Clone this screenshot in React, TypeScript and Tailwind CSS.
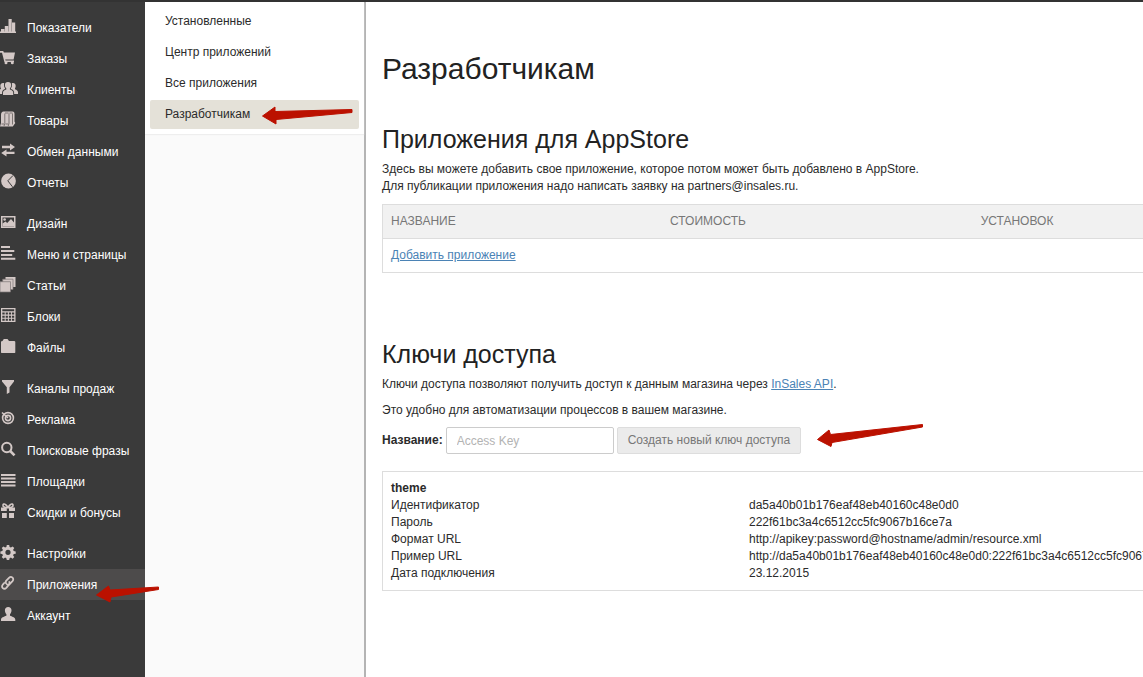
import type { ReactNode } from "react";

type NavItem = { label: string; icon: ReactNode; active?: boolean };

// Icons are drawn on an 18x19 grid and filled with the current text color
const icons = {
  stats: (
    <path d="M0 13.500h16V15H0zM1 11h3.500v3H1zM4.800 8h3.400v6H4.800zM8.500 1h3.200v13H8.500zM12 4.500h3.200V14H12z" />
  ),
  cart: (
    <>
      <path d="M0 2h3.200l.7 1.500H15l-1.400 7H5.200l.4 1H14V13H4.400L2 3.800H0z" />
      <circle cx="6" cy="13.800" r="1.500" />
      <circle cx="12.300" cy="13.800" r="1.500" />
    </>
  ),
  clients: (
    <>
      <path d="M8 2c2 0 3.200 1.300 3.200 3 0 1.500-.6 2.500-1.300 3.300v1.200c2 .8 3.300 1.400 3.300 3V15H3v-2.500c0-1.600 1.300-2.200 3.300-3V8.300C5.500 7.500 4.900 6.500 4.900 5c0-1.700 1.100-3 3.100-3z" />
      <path d="M3 3c.5 0 .9.100 1.200.3-.5 1.900-.2 3.700.9 5.200v.5C3.200 9.800 2.200 10.600 2.100 12.500V14H0v-4.500l1-.8C-.2 6.500 0 3 3 3zM13 3c-.5 0-.9.100-1.200.3.500 1.900.2 3.700-.9 5.200v.5c2 .8 3.100 1.600 3.200 3.500V14H18v-1.800c0-1.600-1.300-2.100-3-2.900V8.200c1.200-1.700 1-5.200-2-5.200z" />
    </>
  ),
  goods: (
    <>
      <path d="M1 4C1 2 2 .5 3.500.5h9c1.500 0 2 1.200 2 2.500v7.500l.8 1.500-2.500 3.500H0L1 12z" />
      <path
        d="M4.800 2.500v10L4 15M9 2.500v10L8.200 15M12.500 2.500v11M5 2h3.500M9.500 2h3M5.500 13h3M1.500 13H4"
        stroke="#716a69"
        strokeWidth="0.9"
        fill="none"
      />
    </>
  ),
  exchange: (
    <path d="M2 3.800h8V1.500L15 5l-5 3.500V6.200H2zM14.500 9.800V12H6.500v2.500L1.200 11l5.300-3.500v2.300z" />
  ),
  reports: (
    <>
      <circle cx="8.500" cy="8" r="7.400" />
      <path d="M13 2.500L7.800 7.800l4.700 6" stroke="#3a3a3a" strokeWidth="1" fill="none" />
    </>
  ),
  design: (
    <>
      <path fillRule="evenodd" d="M1 2h14.500v12H1zM2.500 3.500v9H14v-9z" />
      <path d="M2.500 12.500v-3L5.500 7.500l1.700 1.500L11 5l3 3.500v4z" />
      <circle cx="4.600" cy="5.500" r="1.300" />
    </>
  ),
  pages: <path d="M1 1h9v2H1zM1 5h13.300v2H1zM1 9h11.200v2H1zM1 12.800h14.300v2H1z" />,
  articles: (
    <>
      <path d="M5.500 1h10v10H5.500z" />
      <path d="M2.700 3.200h10.300v10.300H2.700z" stroke="#7d7675" strokeWidth="0.7" />
      <path d="M0 5.700h10.500V16H0z" stroke="#7d7675" strokeWidth="0.7" />
    </>
  ),
  blocks: (
    <path
      fillRule="evenodd"
      d="M1 1h14.500v14H1zM2.300 2.300v1.900h11.900V2.300zM2.300 5.600v2h2.400v-2zM5.700 5.600v2h2.200v-2zM8.900 5.600v2h2.200v-2zM12 5.600v2h2.200v-2zM2.300 8.700v2h2.400v-2zM5.700 8.700v2h2.200v-2zM8.900 8.700v2h2.200v-2zM12 8.700v2h2.200v-2zM2.300 11.800v2h2.400v-2zM5.700 11.800v2h2.200v-2zM8.900 11.800v2h2.200v-2zM12 11.800v2h2.200v-2z"
    />
  ),
  files: <path d="M1 14.500V3.500l1.500-.5L3.800 1h3.700L9 3h5.500l.8.700v10.800l-.5.500H1.500z" />,
  channels: <path d="M2 1h12v1.500L9.500 8.300v5.200L6.800 15V8.300L2 2.500z" />,
  ads: (
    <g fill="none" stroke="currentColor" strokeWidth="1.600">
      <circle cx="8" cy="8" r="5.400" />
      <circle cx="8" cy="8" r="2.600" />
      <path d="M2 2.500l6 5.500" />
    </g>
  ),
  search: (
    <g fill="none" stroke="currentColor">
      <circle cx="6.800" cy="6.500" r="4.700" strokeWidth="2" />
      <path d="M10.200 10l4.300 4.300" strokeWidth="2.600" />
    </g>
  ),
  areas: <path d="M1 2h14.500v2H1zM1 5.500h14.500v2H1zM1 9h14.500v2H1zM1 12.500h14.500v2H1z" />,
  bonuses: (
    <>
      <path d="M1 4.500h5.800V8H1zM9 4.500h6V8H9zM2 10h4.800v5H2zM9 10h5v5H9z" />
      <path
        d="M8 4.500C6 .8 3.500.2 3 2s1.500 2.500 5 2.500C11.500 4.500 13.500 3.800 13 2s-3-1.200-5 2.500z"
        fill="none"
        stroke="currentColor"
        strokeWidth="1.600"
      />
    </>
  ),
  settings: (
    <path
      fillRule="evenodd"
      d="M6.800 1h2.400l.4 2 1.300.6L12.600 2.400l1.700 1.700-1.200 1.700.6 1.300 2 .4v2.200l-2 .4-.6 1.300 1.200 1.700-1.700 1.700-1.700-1.200-1.300.6-.4 1.900H6.800l-.4-1.900-1.300-.6-1.700 1.200-1.700-1.700 1.200-1.700-.6-1.300-1.900-.4V7.500l1.900-.4.6-1.300-1.200-1.700 1.700-1.700 1.700 1.200L6.400 3zM8 5.700a2.600 2.600 0 100 5.200 2.600 2.600 0 000-5.200z"
    />
  ),
  apps: (
    <g fill="none" stroke="currentColor" strokeWidth="1.800" strokeLinecap="round">
      <path d="M6 8.300c-.6-1-.4-1.900.3-2.700L9 2.800c1.100-1.100 2.500-1.100 3.500-.2s1 2.400 0 3.500L9.700 9c-.9.800-1.700 1-2.600.5" />
      <path d="M9.300 7c.6 1 .4 1.900-.3 2.700l-2.700 3.100c-1.100 1.100-2.500 1.200-3.500.3s-1-2.400 0-3.500l1.400-1.600" />
    </g>
  ),
  account: (
    <path d="M8.200 1c2.100 0 3.300 1.400 3.300 3.300 0 1.700-.7 3-1.500 3.900v1.500c2.800 1 5.300 1.800 5.300 4V15H1v-1.300c0-2.200 2.600-3 5.400-4V8.200C5.600 7.300 4.900 6 4.900 4.300 4.900 2.400 6.100 1 8.200 1z" />
  ),
};

const navGroups: NavItem[][] = [
  [
    { label: "Показатели", icon: icons.stats },
    { label: "Заказы", icon: icons.cart },
    { label: "Клиенты", icon: icons.clients },
    { label: "Товары", icon: icons.goods },
    { label: "Обмен данными", icon: icons.exchange },
    { label: "Отчеты", icon: icons.reports },
  ],
  [
    { label: "Дизайн", icon: icons.design },
    { label: "Меню и страницы", icon: icons.pages },
    { label: "Статьи", icon: icons.articles },
    { label: "Блоки", icon: icons.blocks },
    { label: "Файлы", icon: icons.files },
  ],
  [
    { label: "Каналы продаж", icon: icons.channels },
    { label: "Реклама", icon: icons.ads },
    { label: "Поисковые фразы", icon: icons.search },
    { label: "Площадки", icon: icons.areas },
    { label: "Скидки и бонусы", icon: icons.bonuses },
  ],
  [
    { label: "Настройки", icon: icons.settings },
    { label: "Приложения", icon: icons.apps, active: true },
    { label: "Аккаунт", icon: icons.account },
  ],
];

const subMenu = ["Установленные", "Центр приложений", "Все приложения", "Разработчикам"];

const keyInfo = [
  ["Идентификатор", "da5a40b01b176eaf48eb40160c48e0d0"],
  ["Пароль", "222f61bc3a4c6512cc5fc9067b16ce7a"],
  ["Формат URL", "http://apikey:password@hostname/admin/resource.xml"],
  [
    "Пример URL",
    "http://da5a40b01b176eaf48eb40160c48e0d0:222f61bc3a4c6512cc5fc9067b16ce7a@hostname/admin/resource.xml",
  ],
  ["Дата подключения", "23.12.2015"],
];

// Red pointer arrow
function Arrow({ width, height, d, className }: { width: number; height: number; d: string; className: string }) {
  return (
    <svg
      width={width}
      height={height}
      viewBox={`0 0 ${width} ${height}`}
      className={`pointer-events-none shrink-0 fill-[#bb1100] stroke-[#bb1100] ${className}`}
      strokeLinejoin="round"
      aria-hidden="true"
    >
      <path d={d} />
    </svg>
  );
}

function Sidebar() {
  return (
    <nav className="relative z-10 flex w-[145px] shrink-0 flex-col gap-2.5 bg-[#3a3a3a] py-2.5 text-white">
      {navGroups.map((group, i) => (
        <ul key={i}>
          {group.map((item) => (
            <li key={item.label} className={item.active ? "relative bg-[#4d4b4b]" : ""}>
              <a href="#" className="flex h-[31px] items-center gap-[9px]">
                <svg width="18" height="19" viewBox="0 0 18 19" className="shrink-0 fill-current text-[#d3c8c6]" aria-hidden="true">
                  {item.icon}
                </svg>
                <span className="whitespace-nowrap">{item.label}</span>
              </a>
              {item.active && (
                <Arrow
                  width={64}
                  height={20}
                  d="M.500 11L12.500 2l1.500 4L62.500 3v2.500L15 13l-1 5z"
                  className="absolute top-[15px] left-24"
                />
              )}
            </li>
          ))}
        </ul>
      ))}
    </nav>
  );
}

function SubMenu() {
  return (
    <aside className="w-[221px] shrink-0 border-r-2 border-[#b4b4b4] bg-[#fafafa]">
      <ul className="flex flex-col gap-0.5 bg-white p-[5px] shadow-[0_1px_1px_#eeeeee]">
        {subMenu.map((label) => {
          const active = label === "Разработчикам";
          return (
            <li key={label} className={active ? "relative rounded-xs bg-[#e4e1d8]" : ""}>
              <a href="#" className="block px-[15px] py-1.5 leading-[17px]">
                {label}
              </a>
              {active && (
                <Arrow
                  width={92}
                  height={20}
                  d="M.500 10L13 1v4.500L90 3.500v3L14 13.500V18z"
                  className="absolute top-1.5 left-28"
                />
              )}
            </li>
          );
        })}
      </ul>
    </aside>
  );
}

export default function App() {
  return (
    <div className="flex min-h-screen flex-col border-t-2 border-[#333333] bg-white font-['Liberation_Sans',Arial,sans-serif] text-xs text-[#2b2b2b]">
      <div className="flex grow">
        <Sidebar />
        <SubMenu />

        <main className="min-w-0 grow overflow-hidden pt-[47px] pl-4 leading-[17px]">
          <h1 className="text-[30px] leading-10 text-[#222222]">Разработчикам</h1>

          {/* AppStore applications */}
          <section className="pt-[34px]">
            <h2 className="text-[25px] leading-8 text-[#222222]">Приложения для AppStore</h2>
            <p className="pt-1.5">
              Здесь вы можете добавить свое приложение, которое потом может быть добавлено в AppStore.
              <br />
              Для публикации приложения надо написать заявку на partners@insales.ru.
            </p>
            <div className="-mr-4 pt-[9px]">
              <table className="w-full table-fixed border-y border-l border-[#dddddd] text-left">
                <thead className="border-b border-[#dddddd] bg-[#f1f1f1] text-[#777777]">
                  <tr>
                    <th className="w-[36%] px-2 py-2 font-normal">НАЗВАНИЕ</th>
                    <th className="w-[40%] px-2 py-2 font-normal">СТОИМОСТЬ</th>
                    <th className="px-2 py-2 font-normal">УСТАНОВОК</th>
                  </tr>
                </thead>
                <tbody>
                  <tr>
                    <td colSpan={3} className="px-2 py-2">
                      <a href="#" className="text-[#4b83b5] underline">
                        Добавить приложение
                      </a>
                    </td>
                  </tr>
                </tbody>
              </table>
            </div>
          </section>

          {/* Access keys */}
          <section className="pt-[65px]">
            <h2 className="text-[25px] leading-8 text-[#222222]">Ключи доступа</h2>
            <p className="pt-1.5">
              Ключи доступа позволяют получить доступ к данным магазина через{" "}
              <a href="#" className="text-[#4b83b5] underline">
                InSales API
              </a>
              .
            </p>
            <p className="pt-[9px]">Это удобно для автоматизации процессов в вашем магазине.</p>

            <form className="flex items-center pt-2" onSubmit={(e) => e.preventDefault()}>
              <label htmlFor="key-name" className="font-bold">
                Название:
              </label>
              <input
                id="key-name"
                type="text"
                placeholder="Access Key"
                className="ml-[3px] h-[27px] w-[168px] rounded-xs border border-[#cccccc] px-2.5 placeholder:text-[#b3b3b3]"
              />
              <button type="submit" className="ml-[3px] h-[27px] rounded-xs border border-[#dddddd] bg-[#ebebeb] px-2.5 text-[#777777]">
                Создать новый ключ доступа
              </button>
              <Arrow
                width={108}
                height={34}
                d="M.500 15.500L12 6l1.500 4.500L105.500.5v2.500L15 18.500l-1 4z"
                className="-my-4 ml-4"
              />
            </form>

            <div className="mt-[17px] border-y border-l border-[#dddddd] px-2 py-2">
              <h3 className="font-bold">theme</h3>
              <dl>
                {keyInfo.map(([name, value]) => (
                  <div key={name} className="flex">
                    <dt className="w-[358px] shrink-0">{name}</dt>
                    <dd className="whitespace-nowrap">{value}</dd>
                  </div>
                ))}
              </dl>
            </div>
          </section>
        </main>
      </div>
    </div>
  );
}
